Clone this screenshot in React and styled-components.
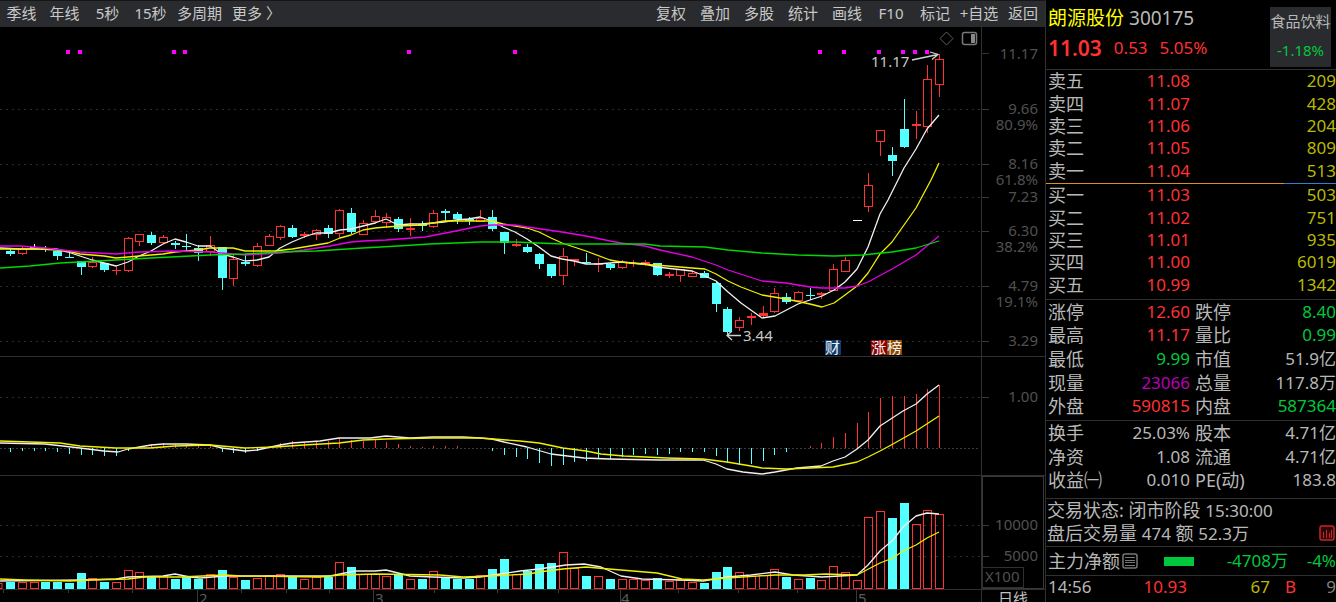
import React from 'react';
import styled, { createGlobalStyle } from 'styled-components';

const GlobalStyle = createGlobalStyle`
	* {
		box-sizing: border-box;
	}
	body {
		margin: 0;
		background: #000;
		color: #b8b8b8;
		font-family: 'Noto Sans', 'Noto Sans CJK SC', sans-serif;
	}
`;

const RED = '#ff3131';
const GREEN = '#00c83c';
const CYAN = '#54ffff';
const YELLOW = '#b9b900';
const MAGENTA = '#b800b8';
const GRAY = '#b8b8b8';

const Screen = styled.div`
	display: flex;
	height: 100vh;
	overflow: hidden;
`;

const Main = styled.main`
	flex: 1;
	min-width: 0;
	display: flex;
	flex-direction: column;
`;

const Toolbar = styled.nav`
	display: flex;
	justify-content: space-between;
	align-items: flex-start;
	height: 27px;
	background: #2a2b2e;
	border-top: 1px solid #161618;
`;

const ToolGroup = styled.div`
	display: flex;
`;

const ToolButton = styled.button`
	min-width: ${(props) => props.$width}px;
	padding: 0 ${(props) => (props.$wide ? 5 : 0)}px;
	border: 0;
	background: none;
	color: #c8c8c8;
	font-family: inherit;
	font-size: 15px;
	line-height: 24px;
	white-space: nowrap;
	cursor: pointer;
`;

const Pane = styled.svg`
	display: block;
	width: 100%;
	flex-shrink: 0;
	font-family: 'Noto Sans', 'Noto Sans CJK SC', sans-serif;
	font-size: 15px;
`;

const Side = styled.aside`
	width: 291px;
	flex-shrink: 0;
	border-left: 1px solid #303030;
	white-space: nowrap;
`;

const Head = styled.header`
	display: flex;
	justify-content: space-between;
	height: 70px;
	padding: 7px 5px 0 2px;
	border-bottom: 1px solid #303030;
`;

const Name = styled.h1`
	display: flex;
	gap: 5px;
	margin: 0;
	font-size: 19px;
	font-weight: 400;
	line-height: 22px;
	color: #ffff00;

	span {
		color: ${GRAY};
	}
`;

const Quote = styled.div`
	display: flex;
	align-items: center;
	gap: 12px;
	margin-top: 5px;
	color: ${RED};
	font-size: 17px;
	line-height: 28px;

	strong {
		font-size: 21px;
		font-weight: 600;
	}
`;

const Sector = styled.a`
	width: 61px;
	height: 60px;
	background: #2a2b2e;
	color: ${GRAY};
	font-size: 15px;
	line-height: 29px;
	text-align: center;
	text-decoration: none;

	span {
		display: block;
		color: ${GREEN};
	}
`;

const Table = styled.table`
	width: 100%;
	height: ${(props) => props.$height}px;
	margin-top: ${(props) => props.$gap || 0}px;
	border-collapse: collapse;
	table-layout: fixed;
	border-top: ${(props) => (props.$line ? '1px solid #303030' : '0')};
`;

const Label = styled.th`
	width: ${(props) => props.$width}px;
	padding: 0 0 0 ${(props) => props.$pad}px;
	font-size: ${(props) => props.$size || 18}px;
	font-weight: 400;
	line-height: 20px;
	text-align: left;
	overflow: visible;
`;

const Value = styled.td`
	width: ${(props) => (props.$width ? props.$width + 'px' : 'auto')};
	padding: 0;
	color: ${(props) => props.$color};
	font-size: 17px;
	line-height: 20px;
	text-align: right;
`;

const Strength = styled.div`
	display: flex;
	height: 2px;
	border-top: 1px solid #000;
	background: #2f7fd8;

	&::before {
		content: '';
		width: 82%;
		background: #d8901e;
	}
`;

const Status = styled.section`
	height: 48px;
	margin-top: 6px;
	padding: 0 0 0 1px;
	border-top: 1px solid #303030;
	font-size: 18px;
	line-height: 23px;
`;

const Line = styled.div`
	display: flex;
	justify-content: space-between;
	align-items: center;
	height: 23px;
`;

const Num = styled.span`
	font-size: 17px;
`;

const IconButton = styled.button`
	display: block;
	padding: 0;
	border: 0;
	background: none;
	cursor: pointer;

	svg {
		display: block;
	}
`;

const Flow = styled.section`
	display: flex;
	align-items: center;
	height: 29px;
	padding-left: 2px;
	border-top: 1px solid #303030;
	font-size: 17px;
	line-height: 24px;
	color: ${GREEN};
`;

const FlowTitle = styled.span`
	display: flex;
	align-items: center;
	gap: 2px;
	width: 116px;
	color: ${GRAY};
	font-size: 18px;
`;

const FlowBar = styled.span`
	width: 30px;
	height: 9px;
	background: ${GREEN};
`;

const FlowValue = styled.span`
	flex: 1;
	text-align: right;
`;

const FlowRatio = styled.span`
	width: 48px;
	text-align: right;
`;

const leftTools = [ '季线', '年线', '5秒', '15秒', '多周期', '更多 〉' ];
const rightTools = [ '复权', '叠加', '多股', '统计', '画线', 'F10', '标记', '+自选', '返回' ];

// type, open/close top, open/close bottom, high, low
const candles = [
	[ 'c', 251, 254, 249, 256 ], [ 'r', 249, 254, 247, 255 ], [ 'w', 247, 247, 244, 248 ], [ 'c', 248, 250, 246, 252 ],
	[ 'c', 251, 256, 251, 260 ], [ 'c', 257, 258, 252, 258 ], [ 'c', 261, 267, 261, 275 ], [ 'r', 262, 267, 257, 268 ],
	[ 'c', 263, 270, 263, 272 ], [ 'r', 270, 271, 265, 275 ], [ 'r', 238, 271, 237, 272 ], [ 'r', 234, 242, 234, 246 ],
	[ 'c', 235, 243, 232, 245 ], [ 'r', 237, 243, 235, 244 ], [ 'c', 243, 245, 241, 249 ], [ 'c', 246, 247, 234, 252 ],
	[ 'c', 248, 253, 245, 261 ], [ 'r', 245, 252, 236, 256 ], [ 'c', 247, 278, 247, 290 ], [ 'r', 259, 279, 254, 286 ],
	[ 'c', 262, 264, 255, 266 ], [ 'r', 246, 266, 243, 267 ], [ 'r', 236, 246, 234, 246 ], [ 'r', 226, 238, 225, 240 ],
	[ 'c', 228, 237, 225, 238 ], [ 'r', 234, 236, 232, 238 ], [ 'r', 230, 235, 229, 240 ], [ 'c', 228, 234, 225, 238 ],
	[ 'r', 210, 234, 209, 238 ], [ 'c', 213, 232, 208, 234 ], [ 'r', 223, 235, 220, 235 ], [ 'r', 216, 222, 210, 224 ],
	[ 'r', 217, 223, 213, 228 ], [ 'c', 219, 229, 217, 232 ], [ 'r', 228, 230, 218, 236 ], [ 'c', 224, 226, 221, 231 ],
	[ 'r', 213, 227, 210, 228 ], [ 'c', 211, 213, 209, 221 ], [ 'c', 214, 219, 212, 224 ], [ 'c', 219, 221, 217, 225 ],
	[ 'r', 218, 222, 210, 222 ], [ 'c', 217, 229, 210, 231 ], [ 'c', 232, 243, 232, 254 ], [ 'r', 244, 246, 239, 247 ],
	[ 'c', 247, 252, 244, 253 ], [ 'c', 254, 264, 253, 269 ], [ 'c', 264, 276, 264, 278 ], [ 'r', 256, 276, 248, 285 ],
	[ 'r', 259, 261, 259, 266 ], [ 'c', 262, 263, 253, 264 ], [ 'r', 263, 265, 258, 272 ], [ 'c', 264, 268, 263, 270 ],
	[ 'r', 262, 268, 260, 269 ], [ 'r', 263, 264, 260, 267 ], [ 'r', 262, 264, 260, 266 ], [ 'c', 263, 275, 263, 276 ],
	[ 'r', 274, 276, 272, 278 ], [ 'r', 269, 276, 269, 282 ], [ 'r', 273, 277, 270, 277 ], [ 'c', 273, 278, 271, 278 ],
	[ 'c', 283, 304, 282, 312 ], [ 'c', 309, 332, 307, 336 ], [ 'r', 320, 328, 317, 331 ], [ 'r', 316, 318, 313, 325 ],
	[ 'r', 313, 316, 306, 317 ], [ 'r', 293, 312, 288, 313 ], [ 'c', 297, 302, 293, 304 ], [ 'r', 292, 301, 291, 302 ],
	[ 'c', 295, 296, 288, 300 ], [ 'r', 293, 295, 292, 299 ], [ 'r', 269, 291, 264, 291 ], [ 'r', 260, 272, 257, 272 ],
	[ 'w', 220, 220, 220, 220 ], [ 'r', 185, 207, 173, 212 ], [ 'r', 130, 142, 130, 156 ], [ 'c', 155, 161, 147, 176 ],
	[ 'c', 129, 147, 99, 148 ], [ 'r', 124, 126, 111, 139 ], [ 'r', 79, 127, 65, 133 ], [ 'r', 59, 85, 54, 97 ],
];

const volumes = [
	582, 582, 582, 582, 582, 583, 573, 578, 582, 582, 570, 572, 576, 576, 579, 577, 579, 574, 570, 577,
	580, 578, 575, 574, 576, 579, 577, 577, 562, 567, 574, 574, 576, 574, 579, 579, 571, 578, 579, 579,
	575, 569, 559, 574, 571, 564, 563, 552, 568, 576, 576, 579, 579, 579, 580, 578, 581, 580, 582, 583,
	572, 567, 572, 576, 575, 569, 577, 579, 578, 580, 566, 572, 580, 517, 511, 518, 503, 524, 510, 514,
];

const macd = [
	452, 451, 451, 451, 452, 454, 455, 455, 456, 456, 451, 446, 444, 443, 444, 444, 446, 446, 452, 453,
	453, 451, 446, 443, 441, 442, 441, 441, 438, 440, 441, 440, 442, 444, 446, 447, 446, 446, 446, 448,
	448, 451, 455, 457, 459, 463, 466, 465, 462, 461, 459, 459, 457, 455, 454, 455, 454, 452, 452, 452,
	456, 463, 465, 464, 461, 455, 452, 448, 446, 443, 437, 433, 423, 412, 398, 396, 396, 394, 389, 385,
];

const ma5 = '0,248 20,249 56,249 68,252 80,256 92,260 104,263 116,266 128,262 139,256 151,251 163,244 175,239 186,242 198,246 210,246 222,254 233,257 245,261 257,260 269,257 280,248 292,242 304,237 316,233 328,233 340,230 351,229 363,226 375,223 386,219 398,225 410,224 421,224 433,223 444,222 456,220 468,219 480,217 492,221 503,227 515,232 527,239 539,247 551,256 562,259 574,261 586,264 598,264 610,263 621,262 645,264 657,267 692,271 705,276 716,281 728,292 741,303 762,318 775,316 798,304 810,300 822,296 834,290 845,282 857,269 868,247 880,214 888,200 904,168 916,149 927,129 939,115';
const ma10 = '0,249 40,249 56,250 68,251 80,254 104,256 116,258 128,257 139,256 163,254 175,252 198,250 210,248 233,248 245,251 275,251 292,249 304,247 316,245 328,243 340,238 351,235 363,230 375,228 386,227 400,226 421,225 433,223 444,221 480,221 492,221 503,224 527,228 539,232 551,238 562,243 586,251 610,260 621,262 640,264 668,266 692,268 705,269 716,274 728,281 741,287 762,295 786,299 810,304 822,307 834,303 845,295 857,286 868,273 880,254 892,242 916,208 931,180 939,163';
const ma20 = '0,246 20,246 45,248 80,252 116,254 139,252 175,251 210,252 245,255 280,253 304,250 330,246 351,242 363,241 386,240 425,237 456,231 480,226 492,225 515,225 527,227 562,232 586,236 610,241 621,243 645,246 660,250 692,257 716,265 728,270 762,281 786,283 810,287 822,288 845,288 857,286 868,282 892,269 916,255 939,236';
const ma60 = '0,268 30,266 60,263 116,260 151,258 210,255 245,254 280,252 316,251 363,248 398,246 430,244 480,242 515,242 562,244 645,244 660,246 705,247 728,250 762,253 798,255 834,256 862,255 892,252 916,248 939,241';
const dif = '0,443 45,444 80,448 104,451 118,452 128,449 151,445 163,444 186,444 210,445 222,448 245,451 257,450 280,445 292,443 320,441 339,438 370,438 386,436 410,438 433,437 463,437 480,438 492,439 504,442 527,447 551,454 584,458 609,459 660,460 703,460 716,464 727,469 743,472 762,474 775,472 797,468 821,466 833,461 845,457 857,449 868,440 880,426 903,411 916,404 927,394 939,385';
const dea = '0,441 60,443 80,446 116,448 150,448 175,446 210,445 245,448 275,447 304,445 339,443 363,440 386,439 433,438 480,438 520,441 539,443 563,448 586,451 601,454 624,456 667,458 703,459 727,462 751,466 762,468 786,469 810,468 833,467 857,462 868,457 880,451 893,444 916,431 939,416';
const vol5 = '0,581 80,580 116,579 128,577 163,576 175,574 190,577 200,578 225,576 330,576 340,574 355,571 375,571 386,570 398,573 410,576 433,577 463,578 480,577 500,574 520,571 539,569 566,565 584,564 601,567 621,576 642,579 682,580 703,581 727,577 751,575 775,572 793,575 822,577 857,575 868,565 880,551 893,540 903,527 916,516 927,513 939,514';
const vol10 = '0,579 25,580 70,581 90,580 128,579 145,577 180,577 225,575 240,576 320,577 340,575 375,574 440,575 463,577 490,576 529,574 539,572 563,569 586,567 609,569 621,570 657,573 682,579 703,580 727,578 775,575 804,575 826,574 857,575 880,563 893,558 903,551 916,545 927,538 939,532';

const barX = (i) => Math.round(10 + i * 11.76);

const Candle = ({ type, top, bottom, high, low, x }) => {
	const color = type === 'r' ? RED : type === 'c' ? CYAN : '#fff';
	const height = bottom - top;
	return (
		<g shapeRendering='crispEdges'>
			{height > 3 && type === 'r' ? (
				<React.Fragment>
					<rect x={x} y={high} width='1' height={top - high} fill={color} />
					<rect x={x} y={bottom} width='1' height={low - bottom} fill={color} />
					<rect x={x - 3.5} y={top + 0.5} width='8' height={height - 1} fill='none' stroke={color} />
				</React.Fragment>
			) : (
				<React.Fragment>
					<rect x={x} y={high} width='1' height={low - high} fill={color} />
					<rect x={x - 4} y={top} width='9' height={Math.max(height, 1)} fill={color} />
				</React.Fragment>
			)}
		</g>
	);
};

const Curve = ({ points, color }) => (
	<polyline points={points} fill='none' stroke={color} strokeWidth='1.3' strokeLinejoin='round' />
);

const Grid = ({ rows }) =>
	rows.map((y) => (
		<g key={y} shapeRendering='crispEdges'>
			<line x1='0' x2='980' y1={y + 0.5} y2={y + 0.5} stroke='#2c2c2c' strokeDasharray='2 4' />
			<line x1='982' x2='989' y1={y + 0.5} y2={y + 0.5} stroke='#3a3a3a' />
		</g>
	));

const AxisText = ({ y, children }) => (
	<text x='1038' y={y} fill='#505050' textAnchor='end'>
		{children}
	</text>
);

const PricePane = () => (
	<Pane viewBox='0 27 1045 330' height='330' role='img' aria-label='K线'>
		<Grid rows={[ 109, 164, 197, 231, 286, 341 ]} />
		<path d='M981.5 27V357M982 53.5h7' stroke='#303030' fill='none' />
		<path d='M0 356.5H1045' stroke='#303030' />
		{[ 68, 80, 174, 185, 409, 515, 820, 844, 879, 903, 915, 927 ].map((x) => (
			<rect key={x} x={x - 2} y='50' width='4' height='4' fill='#f0f' />
		))}
		{candles.map(([ type, top, bottom, high, low ], i) => (
			<Candle key={i} type={type} top={top} bottom={bottom} high={high} low={low} x={barX(i)} />
		))}
		<Curve points={ma5} color='#f0f0f0' />
		<Curve points={ma10} color='#f0f000' />
		<Curve points={ma20} color='#e600e6' />
		<Curve points={ma60} color='#00d800' />
		<path d='M912 60L938 54.500M930 52l8 2.500-6 5' stroke='#d0d0d0' strokeWidth='1.300' fill='none' />
		<text x='871' y='67' fill='#c8c8c8'>11.17</text>
		<path d='M727 335.500H741M732 331l-5 4.500 5 4.500' stroke='#d0d0d0' strokeWidth='1.300' fill='none' />
		<text x='743' y='341' fill='#c8c8c8'>3.44</text>
		<path d='M940 38.500l6.500-6.500 6.500 6.500-6.500 6.500z' stroke='#606060' fill='none' />
		<rect x='962.500' y='32.500' width='14' height='12' rx='2' stroke='#777' strokeWidth='1.500' fill='none' />
		<rect x='971' y='34' width='4' height='9' fill='#888' />
		<rect x='825' y='340' width='16' height='15' fill='#0c3c70' />
		<rect x='871' y='340' width='16' height='15' fill='#8c0000' />
		<rect x='887' y='340' width='15' height='15' fill='#8c4600' />
		<text x='825' y='353' fill='#f0f0f0'>财</text>
		<text x='871' y='353' fill='#f0f0f0'>涨</text>
		<text x='887' y='353' fill='#f0f0f0'>榜</text>
		<AxisText y='59'>11.17</AxisText>
		<AxisText y='114'>9.66</AxisText>
		<AxisText y='130'>80.9%</AxisText>
		<AxisText y='169'>8.16</AxisText>
		<AxisText y='185'>61.8%</AxisText>
		<AxisText y='202'>7.23</AxisText>
		<AxisText y='236'>6.30</AxisText>
		<AxisText y='252'>38.2%</AxisText>
		<AxisText y='291'>4.79</AxisText>
		<AxisText y='307'>19.1%</AxisText>
		<AxisText y='346'>3.29</AxisText>
	</Pane>
);

const MacdPane = () => (
	<Pane viewBox='0 357 1045 119' height='119' role='img' aria-label='MACD'>
		<Grid rows={[ 397 ]} />
		<path d='M0 448.5H980' stroke='#3a3a3a' strokeDasharray='2 2' />
		<path d='M981.5 357V476M0 475.5H1045' stroke='#303030' />
		{macd.map((y, i) => (
			<rect
				key={i}
				x={barX(i)}
				y={Math.min(y, 448)}
				width='1'
				height={Math.abs(y - 448)}
				fill={y > 448 ? CYAN : RED}
			/>
		))}
		<Curve points={dif} color='#f0f0f0' />
		<Curve points={dea} color='#f0f000' />
		<AxisText y='402'>1.00</AxisText>
	</Pane>
);

const VolumePane = () => (
	<Pane viewBox='0 476 1045 126' height='126' role='img' aria-label='成交量'>
		<Grid rows={[ 525, 556 ]} />
		<path d='M0 589.5H1045M981.5 476V602' stroke='#303030' />
		<rect x='982.5' y='476.5' width='61' height='112' stroke='#383838' fill='none' />
		<rect x='-4' y='583.5' width='6' height='5' fill='none' stroke={RED} />
		{volumes.map((y, i) =>
			candles[i][0] === 'c' ? (
				<rect key={i} x={barX(i) - 4} y={y} width='9' height={589 - y} fill={CYAN} />
			) : (
				<rect key={i} x={barX(i) - 3.5} y={y + 0.5} width='8' height={588 - y} fill='none' stroke={RED} />
			)
		)}
		<Curve points={vol5} color='#f0f0f0' />
		<Curve points={vol10} color='#f0f000' />
		<path
			d='M3.500 590v3M68.500 590v3M132.500 590v3M241.500 590v3M286.500 590v3M329.500 590v3M434.500 590v3M497.500 590v3M558.500 590v3M678.500 590v3M738.500 590v3M797.500 590v3M197.500 590v12M373.500 590v12M620.500 590v12M856.500 590v12'
			stroke='#3a3a3a'
		/>
		<g fill='#5a5a5a'>
			<text x='199' y='604'>2</text>
			<text x='375' y='604'>3</text>
			<text x='621' y='604'>4</text>
			<text x='858' y='604'>5</text>
		</g>
		<AxisText y='530'>10000</AxisText>
		<AxisText y='561'>5000</AxisText>
		<rect x='982.500' y='567.500' width='41' height='20' fill='#000' stroke='#303030' />
		<text x='985' y='582' fill='#505050'>X100</text>
		<text x='998' y='604' fill='#c0c0c0'>日线</text>
	</Pane>
);

const sells = [ [ '卖五', '11.08', '209' ], [ '卖四', '11.07', '428' ], [ '卖三', '11.06', '204' ], [ '卖二', '11.05', '809' ], [ '卖一', '11.04', '513' ] ];
const buys = [ [ '买一', '11.03', '503' ], [ '买二', '11.02', '751' ], [ '买三', '11.01', '935' ], [ '买四', '11.00', '6019' ], [ '买五', '10.99', '1342' ] ];

const stats = [
	[ '涨停', '12.60', RED, '跌停', '8.40', GREEN ],
	[ '最高', '11.17', RED, '量比', '0.99', GREEN ],
	[ '最低', '9.99', GREEN, '市值', '51.9亿', GRAY ],
	[ '现量', '23066', MAGENTA, '总量', '117.8万', GRAY ],
	[ '外盘', '590815', RED, '内盘', '587364', GREEN ],
];
const finance = [
	[ '换手', '25.03%', GRAY, '股本', '4.71亿', GRAY ],
	[ '净资', '1.08', GRAY, '流通', '4.71亿', GRAY ],
	[ '收益㈠', '0.010', GRAY, 'PE(动)', '183.8', GRAY ],
];

const OrderTable = ({ rows }) => (
	<Table $height={112}>
		<tbody>
			{rows.map(([ label, price, amount ]) => (
				<tr key={label}>
					<Label scope='row' $width={64} $pad={2}>{label}</Label>
					<Value $width={80} $color={RED}>{price}</Value>
					<Value $color={YELLOW}>{amount}</Value>
				</tr>
			))}
		</tbody>
	</Table>
);

const StatTable = ({ rows, height, gap }) => (
	<Table $height={height} $gap={gap} $line>
		<tbody>
			{rows.map(([ label, value, color, label2, value2, color2 ]) => (
				<tr key={label}>
					<Label scope='row' $width={64} $pad={2}>{label}</Label>
					<Value $width={80} $color={color}>{value}</Value>
					<Label scope='row' $width={56} $pad={5}>{label2}</Label>
					<Value $color={color2}>{value2}</Value>
				</tr>
			))}
		</tbody>
	</Table>
);

const ticks = [
	[ '14:56', '10.93', '67', YELLOW, 'B', '9' ],
	[ '14:56', '10.92', '631', MAGENTA, 'B', '32' ],
];

const App = () => {
	return (
		<Screen>
			<GlobalStyle />
			<Main>
				<Toolbar>
					<ToolGroup>
						{leftTools.map((tool, i) => (
							<ToolButton key={tool} type='button' $width={43} $wide={i > 3}>
								{tool}
							</ToolButton>
						))}
					</ToolGroup>
					<ToolGroup>
						{rightTools.map((tool) => (
							<ToolButton key={tool} type='button' $width={44}>
								{tool}
							</ToolButton>
						))}
					</ToolGroup>
				</Toolbar>
				<PricePane />
				<MacdPane />
				<VolumePane />
			</Main>
			<Side>
				<Head>
					<div>
						<Name>
							朗源股份 <span>300175</span>
						</Name>
						<Quote>
							<strong>11.03</strong>
							<span>0.53</span>
							<span>5.05%</span>
						</Quote>
					</div>
					<Sector href='#sector'>
						食品饮料
						<span>-1.18%</span>
					</Sector>
				</Head>
				<OrderTable rows={sells} />
				<Strength />
				<OrderTable rows={buys} />
				<StatTable rows={stats} height={119} gap={3} />
				<StatTable rows={finance} height={72} gap={2} />
				<Status>
					<Line>
						<span>
							交易状态: 闭市阶段 <Num>15:30:00</Num>
						</span>
					</Line>
					<Line>
						<span>
							盘后交易量 <Num>474</Num> 额 <Num>52.3万</Num>
						</span>
						<IconButton type='button' aria-label='盘后图'>
							<svg width='17' height='17' viewBox='0 0 17 17' fill='none' stroke='#c82424'>
								<rect x='1' y='1' width='14' height='14' rx='2' fill='#2c0808' strokeWidth='1.500' />
								<path d='M4.500 13V7M7.500 13V5M10.500 13V8M12.500 13V5' />
							</svg>
						</IconButton>
					</Line>
				</Status>
				<Flow>
					<FlowTitle>
						主力净额
						<svg width='16' height='16' viewBox='0 0 16 16' fill='none' stroke='#777'>
							<rect x='1' y='1' width='14' height='14' rx='2' strokeWidth='1.500' />
							<path d='M3 4.500h10M3 7.500h10M3 9.500h10M3 12.500h10' />
						</svg>
					</FlowTitle>
					<FlowBar />
					<FlowValue>-4708万</FlowValue>
					<FlowRatio>-4%</FlowRatio>
				</Flow>
				<Table $height={44} $line>
					<tbody>
						{ticks.map(([ time, price, amount, color, side, count ]) => (
							<tr key={price}>
								<Label as='td' $width={64} $pad={2} $size={17}>{time}</Label>
								<Value $width={77} $color={RED}>{price}</Value>
								<Value $width={83} $color={color}>{amount}</Value>
								<Value $width={26} $color={RED}>{side}</Value>
								<Value $color='#808080'>{count}</Value>
							</tr>
						))}
					</tbody>
				</Table>
			</Side>
		</Screen>
	);
};

export default App;
